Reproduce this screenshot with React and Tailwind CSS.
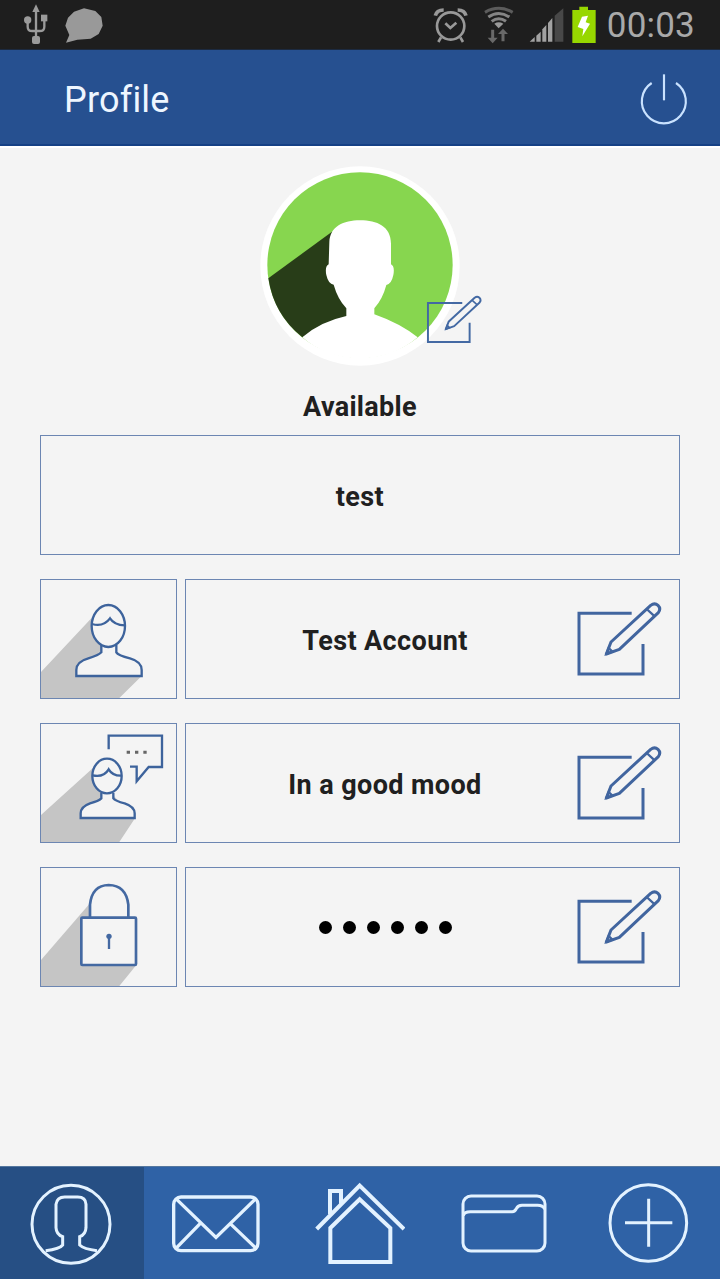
import React from 'react'
import clsx from 'clsx'

function UsbIcon() {
  return (
    <svg width="26" height="42" viewBox="70 12 78 126" fill="none" stroke="#9b9b9b" strokeWidth="7">
      <path d="M109 30V115M84 62V80Q84 93 98 93H120Q134 93 134 80V56" />
      <path d="M109 13L120 36H98Z" fill="#9b9b9b" stroke="none" />
      <rect x="97" y="108" width="24" height="24" rx="6" fill="#9b9b9b" stroke="none" />
      <circle cx="84" cy="60" r="11" fill="#9b9b9b" stroke="none" />
      <rect x="124" y="44" width="19" height="20" fill="#9b9b9b" stroke="none" />
    </svg>
  )
}

function ChatIcon() {
  return (
    <svg width="40" height="36" viewBox="192 18 120 108" fill="#999999">
      <path d="M222 32L252 22L286 30L304 48L308 74L296 99L272 113L232 116L198 125L208 102L196 74L204 50Z" />
    </svg>
  )
}

function AlarmIcon() {
  return (
    <svg width="35" height="38" viewBox="38 18 105 114" fill="none" stroke="#999999" strokeWidth="8">
      <circle cx="91" cy="78" r="41" />
      <path d="M75 70L90 84L108 68" />
      <path d="M45 47Q49 30 70 30M137 47Q133 30 112 30" strokeWidth="11" />
      <path d="M62 112L54 126M120 112L128 126" />
    </svg>
  )
}

function WifiIcon() {
  return (
    <svg width="32" height="38" viewBox="188 20 96 114" fill="none" stroke="#858585" strokeWidth="9">
      <path d="M194 39Q235 15 277 39" stroke="#5c5c5c" />
      <path d="M204 53Q235 32 267 53" />
      <path d="M214 66Q235 50 257 66" />
      <path d="M222 73Q235 65 249 73L235 87Z" fill="#999999" stroke="none" />
      <path d="M217 91V122M248 126V98" stroke="#686868" />
      <path d="M202 115H232L217 132ZM233 104H263L248 88Z" fill="#686868" stroke="none" />
    </svg>
  )
}

function SignalIcon() {
  return (
    <svg width="36" height="36" viewBox="327 24 108 108" fill="#a2a2a2">
      <path d="M329 128L344 114V128Z" />
      <path d="M349 110L362 98V128H349Z" />
      <path d="M367 91L379 78V128H367Z" />
      <path d="M384 72L397 57V128H384Z" />
      <path d="M404 50L430 28V128H404Z" fill="#484848" />
    </svg>
  )
}

function BatteryIcon() {
  return (
    <svg width="24" height="38" viewBox="455 18 72 114">
      <path d="M456 30H477V20H503V30H526V129H456Z" fill="#97d700" />
      <path d="M485 50L503 47L496 67L509 71L486 109L489 87L472 81Z" fill="#ffffff" />
    </svg>
  )
}

function PowerIcon() {
  return (
    <svg width="50" height="54" viewBox="657 216 150 162" fill="none" stroke="#c9e2ff" strokeWidth="6.5">
      <path d="M695 246A66 66 0 1 0 768 246" />
      <path d="M732 220V298" />
    </svg>
  )
}

function Avatar() {
  return (
    <svg width="200" height="200" viewBox="30 33 600 600">
      <circle cx="330" cy="333" r="299" fill="#ffffff" />
      <circle cx="330" cy="330" r="278" fill="#87d64f" />
      <path d="M246 230L55 370A278 278 0 0 0 157 547L300 480L330 300Z" fill="#283d18" />
      <path d="M238 262C240 214 280 196 330 196C382 196 422 214 423 266V328Q435 334 430 360Q425 386 409 390Q398 432 373 460V478Q450 505 503 547Q430 610 330 610Q228 610 157 547Q210 500 289 483V460Q263 432 251 389Q235 387 229 360Q224 334 236 328Z" fill="#ffffff" />
    </svg>
  )
}

function EditIcon({ small }) {
  return (
    <svg
      width={small ? 56 : 86}
      height={small ? 49 : 76}
      viewBox="48 93 258 228"
      preserveAspectRatio="none"
      fill="none"
      stroke={small ? '#4369a3' : '#41659f'}
      strokeWidth="9"
    >
      <path d="M215 130H57V312H249V222" />
      <path d="M139 252L153 216L272 106Q284 97 294 106Q304 116 295 128L178 238Z" strokeLinejoin="round" />
      <path d="M260 117L284 139M139 252L146 234L157 245Z" strokeWidth="7" />
    </svg>
  )
}

function PersonTile() {
  return (
    <svg width="135" height="118" viewBox="33 30 405 354" fill="none" stroke="#3d639c" strokeWidth="7">
      <path d="M184 145L33 306V384H268L335 318L240 240Z" fill="#c5c5c5" stroke="none" />
      <path d="M214 224V247Q206 256 175 265Q139 275 139 300V318H335V300Q335 275 300 265Q264 256 259 247V224" fill="#f4f4f4" />
      <ellipse cx="235" cy="168" rx="50" ry="63" fill="#f4f4f4" />
      <path d="M186 162Q220 172 240 145Q253 165 284 166" />
    </svg>
  )
}

function MoodTile() {
  return (
    <svg width="135" height="118" viewBox="33 27 405 354" fill="none" stroke="#3d639c" strokeWidth="7">
      <path d="M188 160L33 300V381H268L314 311L240 230Z" fill="#c5c5c5" stroke="none" />
      <path d="M214 233V250Q206 258 180 265Q152 275 152 295V309H314V295Q314 275 284 265Q256 258 250 250V233" fill="#f4f4f4" />
      <ellipse cx="231" cy="183" rx="44" ry="52" fill="#f4f4f4" />
      <path d="M188 181Q221 188 236 163Q248 183 274 182" />
      <path d="M236 103V62H396V156H356L320 199V155H300" />
      <path d="M290 112H300M315 112H325M340 112H350" stroke="#666666" strokeWidth="9" />
    </svg>
  )
}

function LockTile() {
  return (
    <svg width="135" height="118" viewBox="33 24 405 354" fill="none" stroke="#4469a2" strokeWidth="8">
      <path d="M180 130L33 300V378H268L319 315L240 200Z" fill="#c5c5c5" stroke="none" />
      <path d="M180 173V134Q186 76 236 75Q288 76 295 134V173" fill="#f4f4f4" />
      <rect x="154" y="173" width="164" height="142" rx="3" fill="#f4f4f4" />
      <path d="M237 230V267" strokeWidth="7" />
      <circle cx="237" cy="229" r="8" fill="#4469a2" stroke="none" />
    </svg>
  )
}

function ProfileTab() {
  return (
    <svg width="84" height="84" viewBox="89 79 252 252" fill="none" stroke="#e3f2ff" strokeWidth="9">
      <circle cx="212" cy="206" r="117" />
      <path d="M136 285Q178 280 187 268V243Q168 237 167 216V146Q170 124 193 124H232Q256 124 257 146V216Q256 237 238 243V268Q250 280 290 285" />
    </svg>
  )
}

function MailTab() {
  return (
    <svg width="90" height="60" viewBox="513 116 270 180" fill="none" stroke="#e3f2ff" strokeWidth="10">
      <rect x="521" y="125" width="253" height="161" rx="22" />
      <path d="M530 132L648 246L765 132M530 277L601 204M766 277L690 204" />
    </svg>
  )
}

function HomeTab() {
  return (
    <svg width="90" height="84" viewBox="106 80 270 252" fill="none" stroke="#e3f2ff" strokeWidth="12">
      <path d="M111 221L240 91L373 221" />
      <path d="M151 177V107H184V145" />
      <path d="M152 218L240 132L332 218V320H152Z" />
    </svg>
  )
}

function FolderTab() {
  return (
    <svg width="88" height="62" viewBox="541 112 264 186" fill="none" stroke="#e3f2ff" strokeWidth="9">
      <rect x="550" y="121" width="246" height="165" rx="24" />
      <path d="M551 180Q553 168 572 168H698Q706 168 710 159Q715 149 727 149H774Q789 149 795 160" />
    </svg>
  )
}

function AddTab() {
  return (
    <svg width="84" height="84" viewBox="199 82 252 252" fill="none" stroke="#e3f2ff" strokeWidth="9">
      <circle cx="326" cy="205" r="115" />
      <path d="M327 132V276M256 204H398" />
    </svg>
  )
}

const rows = [
  { tile: PersonTile, value: 'Test Account' },
  { tile: MoodTile, value: 'In a good mood' },
  { tile: LockTile, password: true },
]

const tabs = [ProfileTab, MailTab, HomeTab, FolderTab, AddTab]

export default function App() {
  return (
    <div className="w-[720px] h-[1279px] flex flex-col overflow-hidden bg-[#f4f4f4] font-['Roboto',sans-serif] text-[#202020]">
      <div className="h-[50px] shrink-0 flex items-center bg-[#1e1e1e] pl-[23px] pr-[25px] pt-px border-b border-[#1c2a40]">
        <UsbIcon />
        <div className="ml-[15px]"><ChatIcon /></div>
        <div className="ml-auto flex items-center">
          <AlarmIcon />
          <div className="ml-[15px]"><WifiIcon /></div>
          <div className="ml-[14px]"><SignalIcon /></div>
          <div className="ml-[7px]"><BatteryIcon /></div>
          <span className="ml-[11px] pt-px text-[35px] tracking-[0.2px] leading-none text-[#a9a9a9]">00:03</span>
        </div>
      </div>

      <header className="h-[96px] shrink-0 flex items-center justify-between bg-[#265090] border-b-2 border-[#154085] pl-16 pr-[31px] pt-[5px]">
        <h1 className="text-[36px] tracking-[0.2px] leading-none text-[#eef6ff]">Profile</h1>
        <PowerIcon />
      </header>

      <main className="flex-1 flex flex-col px-10 pt-5 border-t-2 border-white">
        <div className="relative self-center -mt-0.5">
          <Avatar />
          <div className="absolute left-[166px] top-[129px]"><EditIcon small /></div>
        </div>
        <div className="mt-3 h-[57px] flex items-center justify-center pt-0.5 text-[27px] tracking-[0.3px] font-bold">Available</div>

        <div className="flex flex-col gap-6">
          <div className="h-[120px] flex items-center justify-center pt-1 border border-[#6c86b2] text-[27px] tracking-[0.4px] font-bold">test</div>
          {rows.map(({ tile: Tile, value, password }, i) => (
            <div key={i} className="h-[120px] flex gap-2">
              <div className="w-[137px] shrink-0 border border-[#6c86b2]"><Tile /></div>
              <div className="flex-1 flex items-center border border-[#6c86b2] pl-2 pr-[17px]">
                <div className="flex-1 flex justify-center">
                  {password ? (
                    <div className="flex gap-[11px]">
                      {[0, 1, 2, 3, 4, 5].map((n) => <span key={n} className="size-[13px] rounded-full bg-black" />)}
                    </div>
                  ) : (
                    <span className="pt-1 text-[27px] tracking-[0.4px] font-bold">{value}</span>
                  )}
                </div>
                <EditIcon />
              </div>
            </div>
          ))}
        </div>
      </main>

      <nav className="h-[113px] shrink-0 grid grid-cols-5 bg-[#2f62a6] border-t border-[#55779f]">
        {tabs.map((Tab, i) => (
          <button key={i} className={clsx('flex items-center justify-center pt-0.5', i === 0 && 'bg-[#264f84]')}><Tab /></button>
        ))}
      </nav>
    </div>
  )
}
